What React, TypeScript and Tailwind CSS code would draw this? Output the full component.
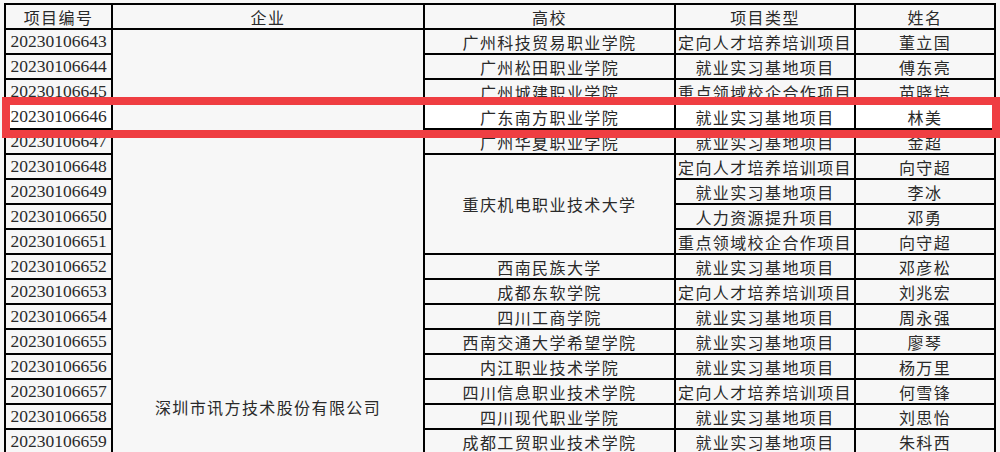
import React from "react";

type Row = { id: string; school?: string; span?: number; type: string; name: string };

const rows: Row[] = [
  { id: "20230106643", school: "广州科技贸易职业学院", type: "定向人才培养培训项目", name: "董立国" },
  { id: "20230106644", school: "广州松田职业学院", type: "就业实习基地项目", name: "傅东亮" },
  { id: "20230106645", school: "广州城建职业学院", type: "重点领域校企合作项目", name: "苗晓培" },
  { id: "20230106646", school: "广东南方职业学院", type: "就业实习基地项目", name: "林美" },
  { id: "20230106647", school: "广州华夏职业学院", type: "就业实习基地项目", name: "金超" },
  { id: "20230106648", school: "重庆机电职业技术大学", span: 4, type: "定向人才培养培训项目", name: "向守超" },
  { id: "20230106649", type: "就业实习基地项目", name: "李冰" },
  { id: "20230106650", type: "人力资源提升项目", name: "邓勇" },
  { id: "20230106651", type: "重点领域校企合作项目", name: "向守超" },
  { id: "20230106652", school: "西南民族大学", type: "就业实习基地项目", name: "邓彦松" },
  { id: "20230106653", school: "成都东软学院", type: "定向人才培养培训项目", name: "刘兆宏" },
  { id: "20230106654", school: "四川工商学院", type: "就业实习基地项目", name: "周永强" },
  { id: "20230106655", school: "西南交通大学希望学院", type: "就业实习基地项目", name: "廖琴" },
  { id: "20230106656", school: "内江职业技术学院", type: "就业实习基地项目", name: "杨万里" },
  { id: "20230106657", school: "四川信息职业技术学院", type: "定向人才培养培训项目", name: "何雪锋" },
  { id: "20230106658", school: "四川现代职业学院", type: "就业实习基地项目", name: "刘思怡" },
  { id: "20230106659", school: "成都工贸职业技术学院", type: "就业实习基地项目", name: "朱科西" },
];

const cjk = "font-['Noto_Sans_CJK_SC',sans-serif] text-[16px] tracking-[1.4px]";
const cell = "border-2 border-black p-0 text-center align-middle whitespace-nowrap overflow-hidden leading-none text-[#2a2a2a]";

export default function App() {
  return (
    <div className="relative w-[1000px] h-[452px] overflow-hidden bg-[#f7f7f7]">
      <table className="table-fixed border-collapse ml-[4px] mt-[3px] w-[990px]">
        <colgroup>
          <col className="w-[107px]" />
          <col className="w-[312px]" />
          <col className="w-[251px]" />
          <col className="w-[180px]" />
          <col className="w-[140px]" />
        </colgroup>
        <thead>
          <tr className="h-[25px]">
            <th className={`${cell} ${cjk} font-normal`}>项目编号</th>
            <th className={`${cell} ${cjk} font-normal`}>企业</th>
            <th className={`${cell} ${cjk} font-normal`}>高校</th>
            <th className={`${cell} ${cjk} font-normal`}>项目类型</th>
            <th className={`${cell} ${cjk} font-normal`}>姓名</th>
          </tr>
        </thead>
        <tbody>
          {rows.map((r, i) => {
            const hi = r.id === "20230106646";
            const bg = hi ? "bg-white" : "";
            return (
              <tr key={r.id} className="h-[25px]">
                <td className={`${cell} ${bg} font-['Liberation_Serif',serif] text-[17.5px] tracking-normal`}>{r.id}</td>
                {i === 0 && (
                  <td rowSpan={rows.length} className={`${cell} ${cjk} align-top`}>
                    <div className="pt-[369px]">深圳市讯方技术股份有限公司</div>
                  </td>
                )}
                {r.school !== undefined && (
                  <td rowSpan={r.span ?? 1} className={`${cell} ${bg} ${cjk}`}>
                    {r.school}
                  </td>
                )}
                <td className={`${cell} ${bg} ${cjk}`}>{r.type}</td>
                <td className={`${cell} ${bg} ${cjk}`}>{r.name}</td>
              </tr>
            );
          })}
        </tbody>
      </table>
      <div className="absolute left-[2px] top-[97px] w-[998px] h-[41px] border-[8px] border-[#ef3e42] pointer-events-none" />
    </div>
  );
}
